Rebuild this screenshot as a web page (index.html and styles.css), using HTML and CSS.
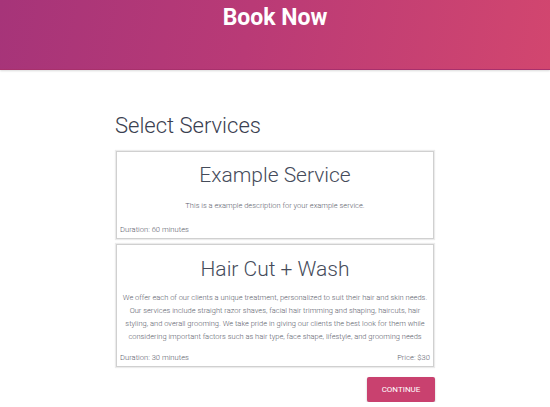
FILE: index.html
```html
<!DOCTYPE html>
<html>
<head>
<meta charset="utf-8">
<link rel="stylesheet" href="styles.css">
</head>
<body>
<header class="hero">
  <h1 class="hero-title">Book Now</h1>
</header>
<main class="content">
  <h2 class="section-title">Select Services</h2>
  <div class="card card-short">
    <h3 class="card-title">Example Service</h3>
    <p class="card-desc">This is a example description for your example service.</p>
    <div class="card-meta">
      <span>Duration: 60 minutes</span>
    </div>
  </div>
  <div class="card card-long">
    <h3 class="card-title">Hair Cut + Wash</h3>
    <p class="card-desc">We offer each of our clients a unique treatment, personalized to suit their hair and skin needs. Our services include straight razor shaves, facial hair trimming and shaping, haircuts, hair styling, and overall grooming. We take pride in giving our clients the best look for them while considering important factors such as hair type, face shape, lifestyle, and grooming needs</p>
    <div class="card-meta">
      <span>Duration: 30 minutes</span>
      <span>Price: $30</span>
    </div>
  </div>
  <div class="actions">
    <button class="btn">CONTINUE</button>
  </div>
</main>
</body>
</html>
```
FILE: styles.css
```css
html, body {
  margin: 0;
  padding: 0;
  background: #ffffff;
  font-family: Roboto, "Liberation Sans", sans-serif;
}
.hero {
  height: 69px;
  background: linear-gradient(100deg, #a63479 0%, #b93a76 45%, #d2466f 100%);
  border-bottom: 1px solid #a8306c;
  box-shadow: 0 1px 2px rgba(0,0,0,0.15);
  text-align: center;
}
.hero-title {
  margin: 0;
  padding-top: 3px;
  font-size: 23px;
  line-height: 30px;
  font-weight: 700;
  color: #ffffff;
}
.content {
  width: 318px;
  margin: 0 auto;
  display: flex;
  flex-direction: column;
}
.section-title {
  margin: 43px 0 0 -1px;
  font-size: 22px;
  line-height: 26px;
  font-weight: 300;
  color: #3a4050;
}
.card {
  margin-top: 12px;
  border: 1px solid #d0d0d0;
  box-shadow: 0 0 1px 1px #ebebeb;
  display: flex;
  flex-direction: column;
}
.card + .card {
  margin-top: 5px;
}
.card-title {
  margin: 11px 0 0;
  text-align: center;
  font-size: 21px;
  line-height: 25px;
  font-weight: 300;
  color: #454b5a;
}
.card-long .card-title {
  margin-top: 12px;
}
.card-desc {
  margin: 11px 4px 0;
  text-align: center;
  font-size: 7.5px;
  line-height: 13px;
  font-weight: 300;
  color: #5c616c;
}
.card-long .card-desc {
  margin-top: 9px;
}
.card-meta {
  display: flex;
  justify-content: space-between;
  padding: 0 3px 3px;
  margin-top: 13px;
  font-size: 7.6px;
  line-height: 10px;
  font-weight: 300;
  color: #5c616c;
}
.card-long .card-meta {
  margin-top: 10px;
}
.actions {
  display: flex;
  justify-content: flex-end;
  margin-top: 10px;
}
.btn {
  width: 68px;
  height: 25px;
  border: none;
  border-radius: 2px;
  background: #c9416f;
  color: #ffffff;
  font-family: Roboto, "Liberation Sans", sans-serif;
  font-size: 8px;
  font-weight: 400;
  box-shadow: 0 1px 2px rgba(0,0,0,0.25);
  margin-right: -1px;
}
```
